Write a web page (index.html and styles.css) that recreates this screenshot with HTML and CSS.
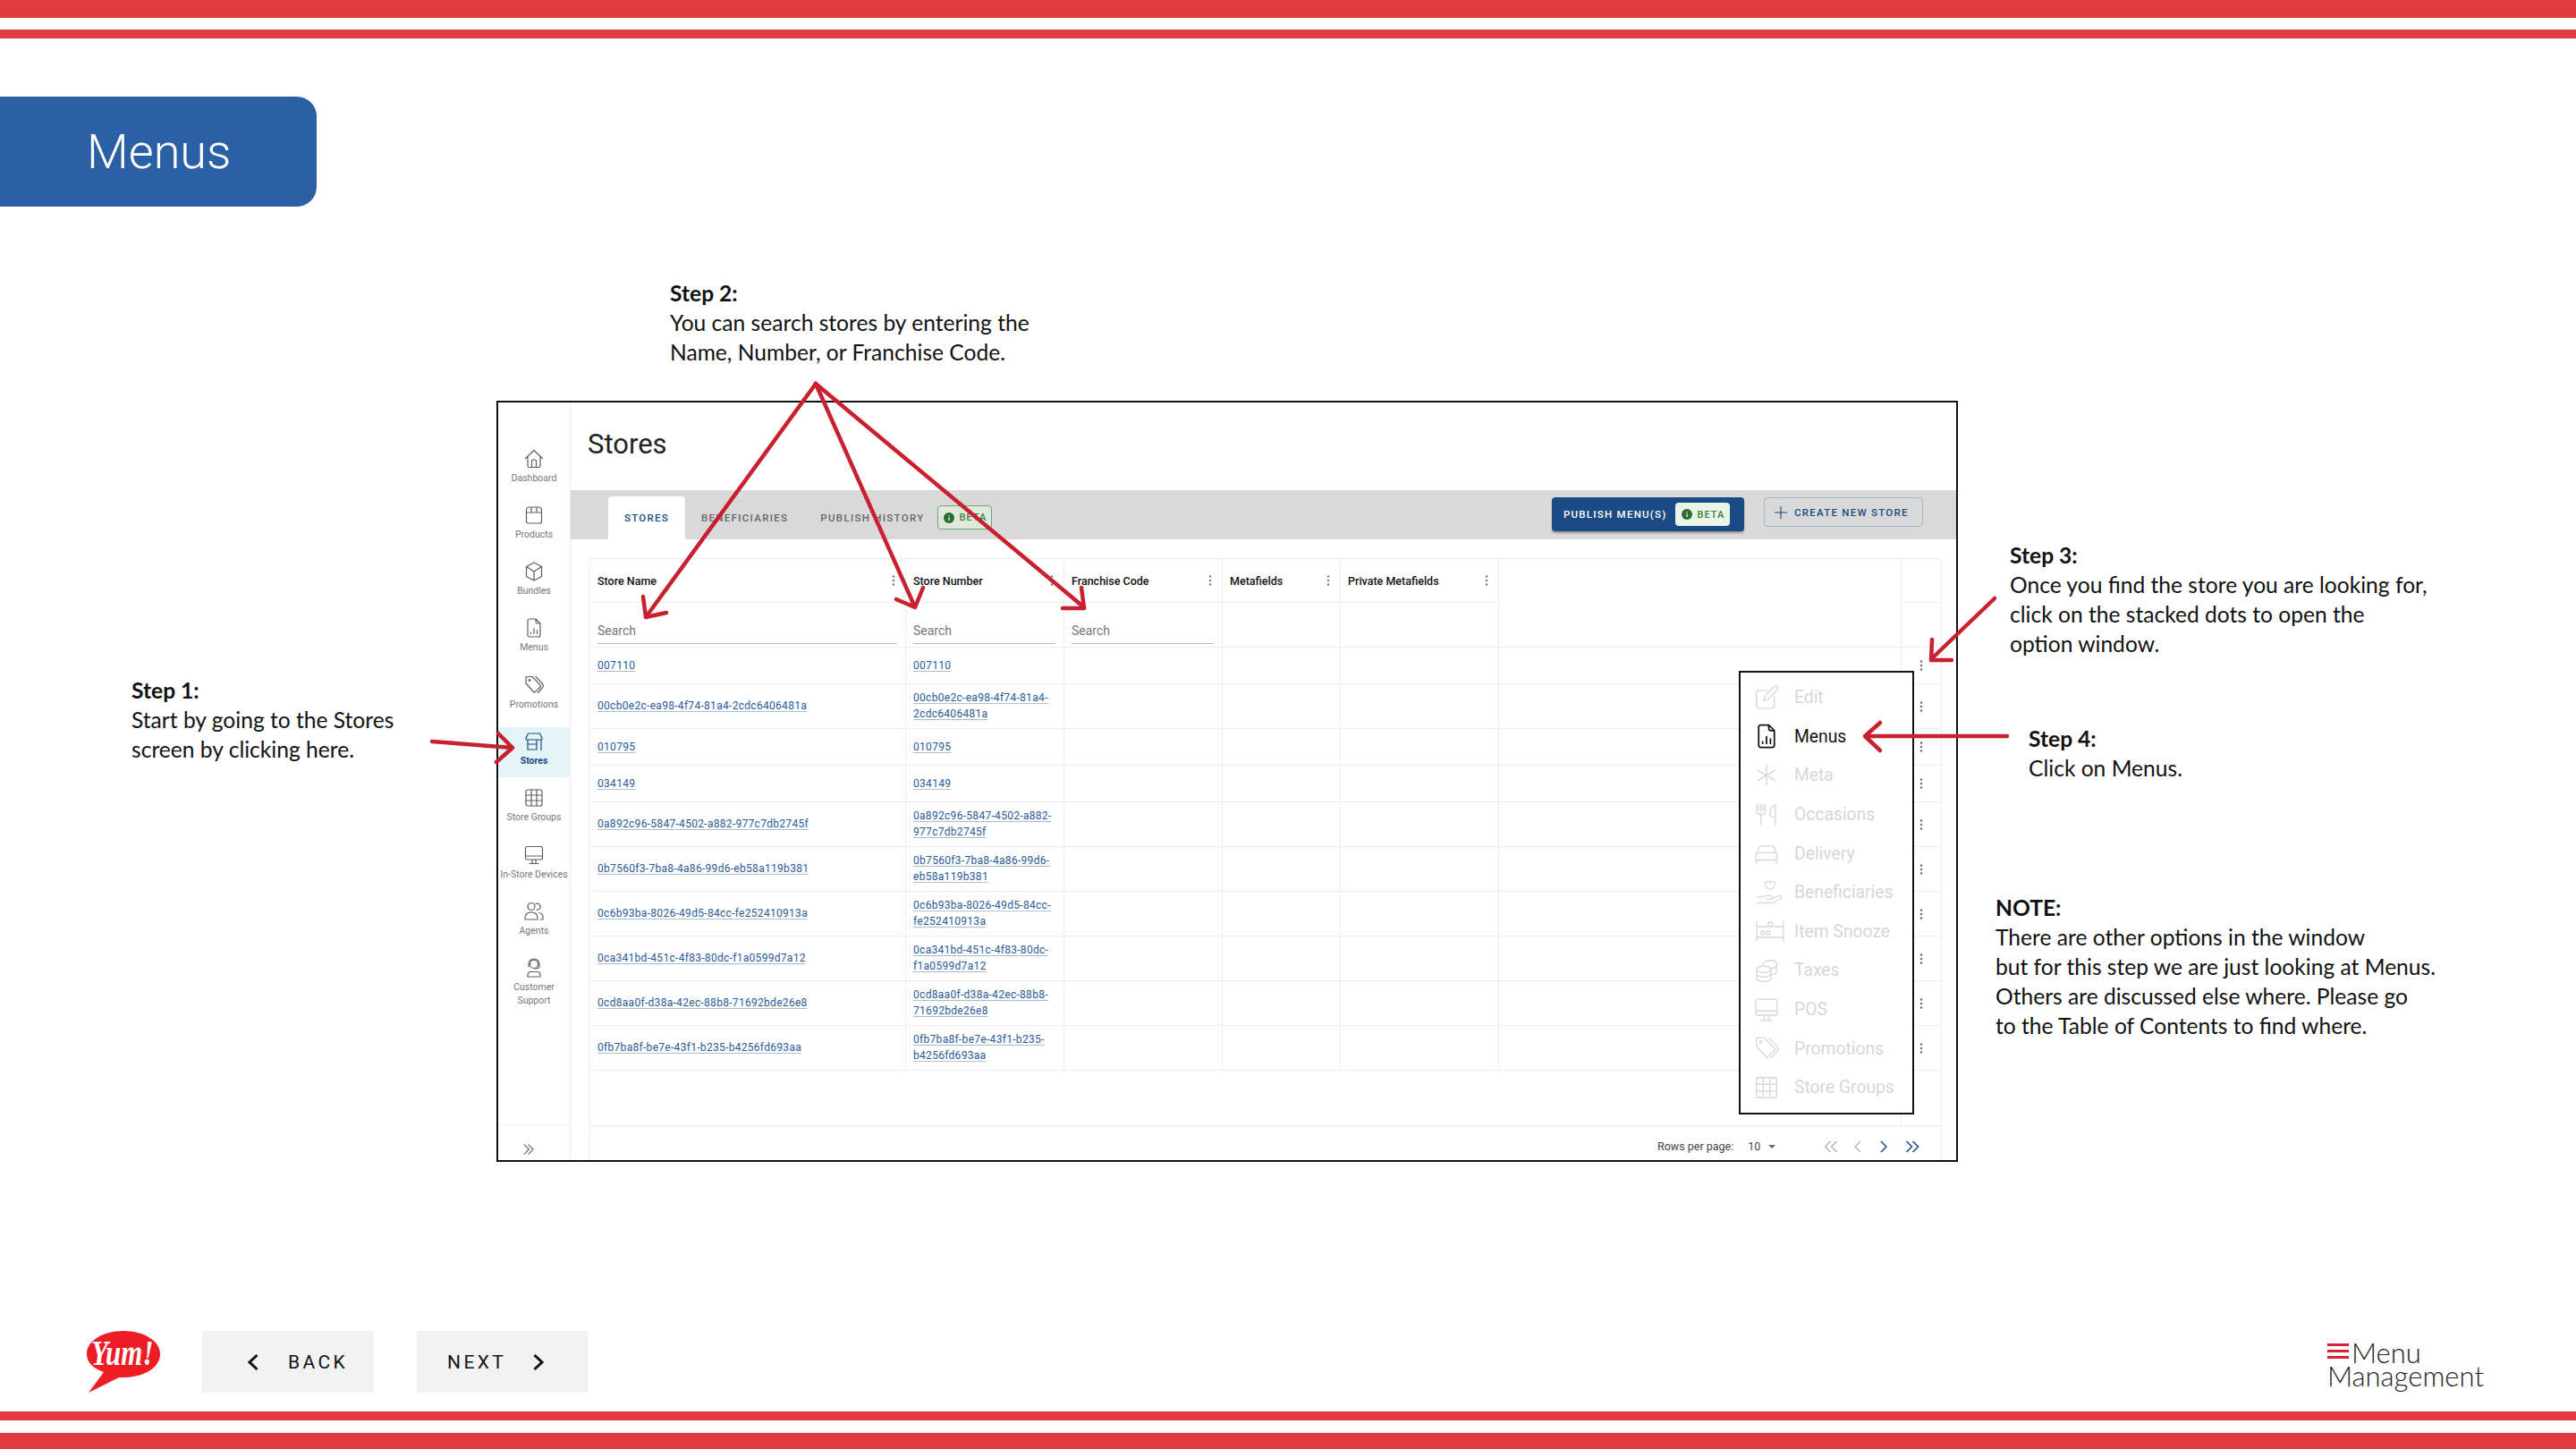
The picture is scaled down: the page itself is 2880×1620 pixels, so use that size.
FILE: index.html
```html
<!DOCTYPE html>
<html lang="en">
<head>
  <meta charset="UTF-8" />
  <title>Menus - Menu Management</title>
  <link rel="stylesheet" href="styles.css">
</head>

<body>
  <svg class="sprite" xmlns="http://www.w3.org/2000/svg">
    <symbol id="i-home" viewBox="0 0 24 24"><path d="M2.5 11.5 12 2.5l9.5 9M5 9.5V20a1.5 1.5 0 0 0 1.5 1.5h11A1.5 1.5 0 0 0 19 20V9.5M9.5 21.5V14a1 1 0 0 1 1-1h3a1 1 0 0 1 1 1v7.500"/></symbol>
    <symbol id="i-box" viewBox="0 0 24 24"><path d="M3.500 9V6a3 3 0 0 1 3-3h11a3 3 0 0 1 3 3v13a2 2 0 0 1-2 2h-13a2 2 0 0 1-2-2zM3.500 9h17M9 3v6M15 3v6"/></symbol>
    <symbol id="i-cube" viewBox="0 0 24 24"><path d="M12 2l8.500 4.500v11L12 22l-8.500-4.500v-11zM3.500 6.500 12 12l8.500-5.500M12 12v10"/></symbol>
    <symbol id="i-doc" viewBox="0 0 24 24"><path d="M7 2h7l5 5v13a2 2 0 0 1-2 2H7a2 2 0 0 1-2-2V4a2 2 0 0 1 2-2zM14 2v3a2 2 0 0 0 2 2h3M8.500 18.500v-1.500M12 18.500v-6M15.500 18.500v-4"/></symbol>
    <symbol id="i-tag" viewBox="0 0 24 24"><path d="M3 3.500a1 1 0 0 1 1-1h6l9 9.500a1.500 1.500 0 0 1 0 2l-5.500 5.500a1.500 1.500 0 0 1-2 0L3 10zM14 2.500l7.500 8a3 3 0 0 1 0 4l-5 6"/><circle cx="7" cy="6.500" r="1"/></symbol>
    <symbol id="i-store" viewBox="0 0 24 24"><path d="M5.500 3h13l2.500 5.500a1 1 0 0 1-1 1.500H4a1 1 0 0 1-1-1.500zM5 10v11h10V10M5 15h10M20 10v11.500"/></symbol>
    <symbol id="i-grid" viewBox="0 0 24 24"><rect x="3" y="3" width="18" height="18" rx="2"/><path d="M3 9h18M3 15h18M9 3v18M15 3v18"/></symbol>
    <symbol id="i-monitor" viewBox="0 0 24 24"><rect x="2.500" y="2.500" width="19" height="14.500" rx="2"/><path d="M2.500 13h19M10 17v4M14 17v4M7 21.500h10"/></symbol>
    <symbol id="i-agents" viewBox="0 0 24 24"><circle cx="9" cy="6.500" r="4"/><path d="M14 3.500a3.500 3.500 0 1 1 1 6.500M2 21v-2a6 6 0 0 1 6-6h2a6 6 0 0 1 6 6v2zM18 13.500a5 5 0 0 1 4 5V21h-3"/></symbol>
    <symbol id="i-support" viewBox="0 0 24 24"><circle cx="12" cy="8" r="4.500"/><path d="M6 11V8a6 6 0 0 1 12 0v2c0 2-2 3-5 3M5 22v-2a3.500 3.500 0 0 1 3.500-3.500h7A3.500 3.500 0 0 1 19 20v2z"/></symbol>
    <symbol id="i-edit" viewBox="0 0 24 24"><path d="M19 11v8a2.500 2.500 0 0 1-2.500 2.500h-11A2.500 2.500 0 0 1 3 19V8a2.500 2.500 0 0 1 2.500-2.500H13M9.500 14.500l1-4 8.500-8.500a1.800 1.800 0 0 1 2.800 2.500L13.500 13.500z"/></symbol>
    <symbol id="i-meta" viewBox="0 0 24 24"><path d="M12 3v18M4.200 7.500l15.600 9M19.800 7.500l-15.600 9"/></symbol>
    <symbol id="i-food" viewBox="0 0 24 24"><path d="M3 3v5a4 4 0 0 0 8 0V3M7 3v6M5 3v5M9 3v5M7 12v9M20 3c-4 1-5 5-5 9 0 1 1 2 2 2h3M20 3v18"/></symbol>
    <symbol id="i-car" viewBox="0 0 24 24"><path d="M3.500 12l1.500-4.500a2.500 2.500 0 0 1 2.500-2h9a2.500 2.500 0 0 1 2.500 2l1.500 4.500M2.500 12.500a1 1 0 0 1 1-1h17a1 1 0 0 1 1 1V18h-19zM3 18v2.500M21 18v2.500M6 15h.01M18 15h.01"/></symbol>
    <symbol id="i-hand" viewBox="0 0 28 24"><path d="M14 9.500s-5-2.800-5-5.800a2.600 2.600 0 0 1 5-1 2.600 2.600 0 0 1 5 1c0 3-5 5.800-5 5.800zM1 17h5l3-1.500h5.500a1.500 1.500 0 0 1 0 3.500H10M15 18.500l8-3a2 2 0 0 1 2.500 2.500L17 22.500H1"/></symbol>
    <symbol id="i-snooze" viewBox="0 0 32 24"><path d="M1 1v22M31 1v22M1 7h12M21 7h10M1 19h30"/><rect x="14" y="2" width="5" height="5" rx="1"/><rect x="6" y="12" width="4" height="4" rx="1"/><rect x="12" y="12" width="4" height="4" rx="1"/></symbol>
    <symbol id="i-coins" viewBox="0 0 24 24"><ellipse cx="9.500" cy="11" rx="6.500" ry="3"/><path d="M3 11v8c0 1.700 2.900 3 6.500 3s6.500-1.300 6.500-3v-8M3 15c0 1.700 2.900 3 6.500 3s6.500-1.300 6.500-3M8.500 6.500C9 4.500 12 3 15 3c3.500 0 6 1 6 3v7c0 1.500-2 2.500-5 2.500M16 10c3 0 5-1 5-3"/></symbol>
    <symbol id="i-kebab" viewBox="0 0 4 12"><circle cx="2" cy="1.500" r="1.200"/><circle cx="2" cy="6" r="1.200"/><circle cx="2" cy="10.500" r="1.200"/></symbol>
    <symbol id="i-info" viewBox="0 0 12 12"><circle cx="6" cy="6" r="6"/><path class="info-mark" d="M6 5.200v3.800M6 3v1"/></symbol>
  </svg>

  <div class="slide">
    <div class="bars bars-top"><i></i><i></i></div>

    <header class="title-box"><h1>Menus</h1></header>

    <section class="frame">
      <nav class="sidebar">
        <ul class="side-list">
          <li class="side-item"><svg class="side-icon"><use href="#i-home"/></svg><span>Dashboard</span></li>
          <li class="side-item"><svg class="side-icon"><use href="#i-box"/></svg><span>Products</span></li>
          <li class="side-item"><svg class="side-icon"><use href="#i-cube"/></svg><span>Bundles</span></li>
          <li class="side-item"><svg class="side-icon"><use href="#i-doc"/></svg><span>Menus</span></li>
          <li class="side-item"><svg class="side-icon"><use href="#i-tag"/></svg><span>Promotions</span></li>
          <li class="side-item active"><svg class="side-icon"><use href="#i-store"/></svg><span>Stores</span></li>
          <li class="side-item"><svg class="side-icon"><use href="#i-grid"/></svg><span>Store Groups</span></li>
          <li class="side-item"><svg class="side-icon"><use href="#i-monitor"/></svg><span>In-Store Devices</span></li>
          <li class="side-item"><svg class="side-icon"><use href="#i-agents"/></svg><span>Agents</span></li>
          <li class="side-item"><svg class="side-icon"><use href="#i-support"/></svg><span>Customer<br>Support</span></li>
        </ul>
        <div class="side-foot">
          <svg class="side-expand" viewBox="0 0 14 14"><path d="M2 1l6 6-6 6M7 1l6 6-6 6"/></svg>
        </div>
      </nav>

      <div class="app">
        <h2 class="app-title">Stores</h2>

        <div class="tabbar">
          <div class="tab active">STORES</div>
          <div class="tab tab-second">BENEFICIARIES</div>
          <div class="tab tab-third">PUBLISH HISTORY</div>
          <div class="beta beta-tab"><svg class="beta-icon"><use href="#i-info"/></svg>BETA</div>
          <div class="tab-actions">
            <button class="btn-publish">PUBLISH MENU(S)<span class="beta beta-btn"><svg class="beta-icon"><use href="#i-info"/></svg>BETA</span></button>
            <button class="btn-create"><svg class="plus" viewBox="0 0 14 14"><path d="M7 0v14M0 7h14"/></svg>CREATE NEW STORE</button>
          </div>
        </div>

        <div class="panel">
          <table class="grid">
            <colgroup>
              <col class="c-name"><col class="c-num"><col class="c-fran"><col class="c-meta"><col class="c-priv"><col class="c-blank"><col class="c-act">
            </colgroup>
            <thead>
              <tr class="row-head">
                <th><div class="th-in">Store Name<svg class="kebab"><use href="#i-kebab"/></svg></div></th>
                <th><div class="th-in">Store Number<svg class="kebab"><use href="#i-kebab"/></svg></div></th>
                <th><div class="th-in">Franchise Code<svg class="kebab"><use href="#i-kebab"/></svg></div></th>
                <th><div class="th-in">Metafields<svg class="kebab"><use href="#i-kebab"/></svg></div></th>
                <th><div class="th-in">Private Metafields<svg class="kebab"><use href="#i-kebab"/></svg></div></th>
                <th class="blank" rowspan="2"></th>
                <th class="act"></th>
              </tr>
              <tr class="row-filter">
                <td><div class="search">Search</div></td>
                <td><div class="search">Search</div></td>
                <td><div class="search">Search</div></td>
                <td></td>
                <td></td>
                <td class="act"></td>
              </tr>
            </thead>
            <tbody>
              <tr><td><a href="#">007110</a></td><td><a href="#">007110</a></td><td></td><td></td><td></td><td></td><td class="act"><svg class="kebab dark"><use href="#i-kebab"/></svg></td></tr>
              <tr class="tall"><td><a href="#">00cb0e2c-ea98-4f74-81a4-2cdc6406481a</a></td><td><a href="#">00cb0e2c-ea98-4f74-81a4-<br>2cdc6406481a</a></td><td></td><td></td><td></td><td></td><td class="act"><svg class="kebab dark"><use href="#i-kebab"/></svg></td></tr>
              <tr><td><a href="#">010795</a></td><td><a href="#">010795</a></td><td></td><td></td><td></td><td></td><td class="act"><svg class="kebab dark"><use href="#i-kebab"/></svg></td></tr>
              <tr><td><a href="#">034149</a></td><td><a href="#">034149</a></td><td></td><td></td><td></td><td></td><td class="act"><svg class="kebab dark"><use href="#i-kebab"/></svg></td></tr>
              <tr class="tall"><td><a href="#">0a892c96-5847-4502-a882-977c7db2745f</a></td><td><a href="#">0a892c96-5847-4502-a882-<br>977c7db2745f</a></td><td></td><td></td><td></td><td></td><td class="act"><svg class="kebab dark"><use href="#i-kebab"/></svg></td></tr>
              <tr class="tall"><td><a href="#">0b7560f3-7ba8-4a86-99d6-eb58a119b381</a></td><td><a href="#">0b7560f3-7ba8-4a86-99d6-<br>eb58a119b381</a></td><td></td><td></td><td></td><td></td><td class="act"><svg class="kebab dark"><use href="#i-kebab"/></svg></td></tr>
              <tr class="tall"><td><a href="#">0c6b93ba-8026-49d5-84cc-fe252410913a</a></td><td><a href="#">0c6b93ba-8026-49d5-84cc-<br>fe252410913a</a></td><td></td><td></td><td></td><td></td><td class="act"><svg class="kebab dark"><use href="#i-kebab"/></svg></td></tr>
              <tr class="tall"><td><a href="#">0ca341bd-451c-4f83-80dc-f1a0599d7a12</a></td><td><a href="#">0ca341bd-451c-4f83-80dc-<br>f1a0599d7a12</a></td><td></td><td></td><td></td><td></td><td class="act"><svg class="kebab dark"><use href="#i-kebab"/></svg></td></tr>
              <tr class="tall"><td><a href="#">0cd8aa0f-d38a-42ec-88b8-71692bde26e8</a></td><td><a href="#">0cd8aa0f-d38a-42ec-88b8-<br>71692bde26e8</a></td><td></td><td></td><td></td><td></td><td class="act"><svg class="kebab dark"><use href="#i-kebab"/></svg></td></tr>
              <tr class="tall"><td><a href="#">0fb7ba8f-be7e-43f1-b235-b4256fd693aa</a></td><td><a href="#">0fb7ba8f-be7e-43f1-b235-<br>b4256fd693aa</a></td><td></td><td></td><td></td><td></td><td class="act"><svg class="kebab dark"><use href="#i-kebab"/></svg></td></tr>
              <tr class="spacer"><td colspan="6"></td><td class="act"></td></tr>
            </tbody>
          </table>

          <div class="pager">
            <span class="pager-label">Rows per page:</span>
            <span class="pager-size">10</span>
            <span class="pager-caret"></span>
            <svg class="pg pg-double off" viewBox="0 0 16 14"><path d="M7.500 1 1.500 7l6 6M14.500 1l-6 6 6 6"/></svg>
            <svg class="pg pg-single off" viewBox="0 0 8 14"><path d="M7 1 1 7l6 6"/></svg>
            <svg class="pg pg-single on" viewBox="0 0 8 14"><path d="M1 1l6 6-6 6"/></svg>
            <svg class="pg pg-double on" viewBox="0 0 16 14"><path d="M1.500 1l6 6-6 6M8.500 1l6 6-6 6"/></svg>
          </div>
        </div>

        <ul class="popup">
          <li class="pop-item"><svg class="pop-icon"><use href="#i-edit"/></svg>Edit</li>
          <li class="pop-item enabled"><svg class="pop-icon"><use href="#i-doc"/></svg>Menus</li>
          <li class="pop-item"><svg class="pop-icon"><use href="#i-meta"/></svg>Meta</li>
          <li class="pop-item"><svg class="pop-icon"><use href="#i-food"/></svg>Occasions</li>
          <li class="pop-item"><svg class="pop-icon"><use href="#i-car"/></svg>Delivery</li>
          <li class="pop-item"><svg class="pop-icon wide"><use href="#i-hand"/></svg>Beneficiaries</li>
          <li class="pop-item"><svg class="pop-icon wider"><use href="#i-snooze"/></svg>Item Snooze</li>
          <li class="pop-item"><svg class="pop-icon"><use href="#i-coins"/></svg>Taxes</li>
          <li class="pop-item"><svg class="pop-icon"><use href="#i-monitor"/></svg>POS</li>
          <li class="pop-item"><svg class="pop-icon"><use href="#i-tag"/></svg>Promotions</li>
          <li class="pop-item"><svg class="pop-icon"><use href="#i-grid"/></svg>Store Groups</li>
        </ul>
      </div>
    </section>

    <div class="note note-1"><b>Step 1:</b><br>Start by going to the Stores<br>screen by clicking here.</div>
    <div class="note note-2"><b>Step 2:</b><br>You can search stores by entering the<br>Name, Number, or Franchise Code.</div>
    <div class="note note-3"><b>Step 3:</b><br>Once you find the store you are looking for,<br>click on the stacked dots to open the<br>option window.</div>
    <div class="note note-4"><b>Step 4:</b><br>Click on Menus.</div>
    <div class="note note-5"><b>NOTE:</b><br>There are other options in the window<br>but for this step we are just looking at Menus.<br>Others are discussed else where. Please go<br>to the Table of Contents to find where.</div>

    <!-- red callout arrows, page coordinates -->
    <svg class="arrows" viewBox="0 0 2880 1620">
      <path d="M912 429 722 690M719 667 722 690 745 685"/>
      <path d="M912 429 1023 679M1032 657 1023 679 1002 670"/>
      <path d="M912 429 1212 679M1209 657 1212 680 1188 680"/>
      <path d="M483 829 573 836M557 820 573 836 555 852"/>
      <path d="M2230 669 2159 737M2160 715 2159 738 2182 738"/>
      <path d="M2244 823H2085M2102 808 2085 823 2102 839"/>
    </svg>

    <footer class="foot">
      <svg class="yum" viewBox="0 0 84 70">
        <path class="yum-bubble" d="M42 0C65 0 83 11 83 26S65 52 42 52H37L3 69 20 46C8 42 1 35 1 26 1 11 19 0 42 0z"/>
        <text class="yum-text" transform="translate(6 38) scale(1 1.3)">Yum!</text>
      </svg>
      <button class="nav-btn nav-back"><svg class="nav-chev" viewBox="0 0 12 20"><path d="M10.500 2 2 10l8.500 8"/></svg>BACK</button>
      <button class="nav-btn nav-next">NEXT<svg class="nav-chev" viewBox="0 0 12 20"><path d="M1.500 2 10 10l-8.500 8"/></svg></button>
      <div class="brand">
        <div class="brand-top"><span class="brand-bars"><i></i><i></i><i></i></span>Menu</div>
        <div>Management</div>
      </div>
    </footer>

    <div class="bars bars-bottom"><i></i><i></i></div>
  </div>
</body>
</html>
```

FILE: styles.css
```css
* { box-sizing: border-box; margin: 0; padding: 0; }
html, body { background: #fff; }
body {
  width: 2880px;
  height: 1620px;
  overflow: hidden;
  font-family: 'Roboto', sans-serif;
  color: #111;
}
ul { list-style: none; }
button { font-family: inherit; border: none; cursor: pointer; }
.sprite { display: none; }

.slide {
  position: relative;
  width: 2880px;
  height: 1620px;
  display: flex;
  flex-direction: column;
}

/* red stripes */
.bars i { display: block; background: #e03c40; }
.bars-top i:first-child { height: 20px; margin-bottom: 13px; }
.bars-top i:last-child { height: 10px; }
.bars-bottom { margin-top: 21px; }
.bars-bottom i:first-child { height: 10px; margin-bottom: 14px; }
.bars-bottom i:last-child { height: 18px; }

.title-box {
  width: 354px;
  height: 123px;
  margin-top: 65px;
  padding-left: 97px;
  display: flex;
  align-items: center;
  background: #2b5fa6;
  border-radius: 0 22px 22px 0;
}
.title-box h1 {
  font-size: 54px;
  font-weight: 300;
  color: #fff;
}

/* screenshot of the app */
.frame {
  position: relative;
  width: 1634px;
  height: 851px;
  margin: 217px 0 0 555px;
  display: flex;
  border: 2px solid #111;
  background: #fff;
}
.sidebar {
  width: 81px;
  flex: none;
  display: flex;
  flex-direction: column;
  border-right: 1px solid #eee;
}
.side-list {
  padding-top: 46.5px;
  display: flex;
  flex-direction: column;
  gap: 7.3px;
}
.side-item {
  height: 56px;
  padding-top: 4px;
  display: flex;
  flex-direction: column;
  align-items: center;
  font-size: 10.5px;
  line-height: 15px;
  text-align: center;
  white-space: nowrap;
  color: #777;
}
.side-item.active {
  background: #e5f5f7;
  color: #1a4b84;
  font-weight: 700;
}
.side-icon {
  width: 24px;
  height: 24px;
  margin-bottom: 2px;
  flex: none;
  fill: none;
  stroke: #5f5f5f;
  stroke-width: 1.2;
  stroke-linejoin: round;
  stroke-linecap: round;
}
.side-item.active .side-icon { stroke: #1a4b84; }
.side-foot {
  margin-top: auto;
  height: 40px;
  padding: 20px 0 0 27px;
  border-top: 1px solid #f0f0f0;
}
.side-expand {
  display: block;
  width: 13px;
  height: 14px;
  fill: none;
  stroke: #666;
  stroke-width: 1.2;
}

.app {
  flex: 1;
  min-width: 0;
  display: flex;
  flex-direction: column;
}
.app-title {
  height: 98px;
  padding: 27px 0 0 19px;
  font-size: 31px;
  line-height: 40px;
  font-weight: 400;
  color: #222;
}
.tabbar {
  height: 55px;
  padding-left: 42px;
  display: flex;
  background: #d9d9d9;
}
.tab {
  margin-top: 7px;
  height: 48px;
  line-height: 48px;
  font-size: 11.5px;
  font-weight: 500;
  letter-spacing: 1.3px;
  color: #666;
  white-space: nowrap;
}
.tab.active {
  width: 86px;
  text-align: center;
  background: #fff;
  border-radius: 4px 4px 0 0;
  color: #1a4b84;
}
.tab-second { margin-left: 18px; }
.tab-third { margin-left: 36px; }
.beta {
  display: flex;
  align-items: center;
  gap: 6px;
  font-size: 11px;
  font-weight: 500;
  letter-spacing: 1px;
  color: #3c7f3e;
  background: #dfeadd;
  border-radius: 4px;
}
.beta-tab {
  width: 61px;
  height: 27px;
  margin: 17px 0 0 14px;
  padding-left: 6px;
  border: 1px solid #6ea571;
}
.beta-icon {
  width: 12px;
  height: 12px;
  flex: none;
  fill: #2e6b31;
}
.info-mark { stroke: #dfeadd; stroke-width: 1.4; fill: none; }
.tab-actions {
  margin-left: auto;
  padding: 8px 37px 0 0;
  display: flex;
  align-items: flex-start;
  gap: 22px;
}
.btn-publish {
  width: 215px;
  height: 38px;
  padding-left: 13px;
  display: flex;
  align-items: center;
  background: #1a4b84;
  color: #fff;
  font-size: 11.5px;
  font-weight: 500;
  letter-spacing: 1.25px;
  border-radius: 4px;
  box-shadow: 0 2px 2px rgba(0,0,0,0.3);
  white-space: nowrap;
}
.beta-btn {
  width: 61px;
  height: 26px;
  margin-left: 9px;
  padding-left: 7px;
  background: #e9f6e7;
}
.btn-create {
  width: 178px;
  height: 33px;
  padding-left: 11px;
  display: flex;
  align-items: center;
  gap: 8px;
  background: transparent;
  border: 1px solid #9fb3ca;
  border-radius: 4px;
  color: #1a4b84;
  font-size: 11.5px;
  font-weight: 500;
  letter-spacing: 1.25px;
  white-space: nowrap;
}
.plus { width: 14px; height: 14px; flex: none; fill: none; stroke: #1a4b84; stroke-width: 1.1; }

.panel {
  flex: 1;
  min-height: 0;
  margin: 21px 16px 0 21px;
  display: flex;
  flex-direction: column;
  border: 1px solid #eee;
  border-bottom: none;
  border-radius: 4px 4px 0 0;
}
.grid {
  width: 1510px;
  table-layout: fixed;
  border-collapse: separate;
  border-spacing: 0;
  font-size: 12px;
}
.c-name { width: 353px; }
.c-num, .c-fran, .c-priv { width: 177px; }
.c-meta { width: 132px; }
.c-blank { width: 450px; }
.c-act { width: 44px; }
.grid th, .grid td {
  padding: 0;
  border-right: 1px solid #eee;
  border-bottom: 1px solid #eee;
  text-align: left;
  vertical-align: middle;
}
.grid .act { border-right: none; text-align: center; }
.row-head th { height: 49px; font-size: 12.5px; font-weight: 500; color: #111; }
.row-filter td { height: 50px; vertical-align: bottom; }
.th-in {
  padding: 0 11px 0 8px;
  display: flex;
  align-items: center;
  justify-content: space-between;
  white-space: nowrap;
}
.kebab { display: block; width: 4px; height: 12px; fill: #777; }
.kebab.dark { margin: 0 auto; fill: #666; }
.search {
  margin: 0 9px 3px 8px;
  height: 28px;
  line-height: 26px;
  font-size: 14px;
  color: #777;
  border-bottom: 1px solid #bbb;
}
tbody td { height: 41px; }
tbody tr.tall td { height: 50px; }
tbody td:not(.act) { padding: 1px 0 0 8px; }
tbody tr.spacer td { height: 61px; border-bottom: none; }
tbody tr.spacer td:first-child { border-right: 1px solid #eee; padding: 0; }
.grid a {
  display: inline-block;
  line-height: 17.6px;
  letter-spacing: 0.3px;
  color: #2a5a96;
  text-decoration: underline;
  text-decoration-color: #a9bcd6;
  text-underline-offset: 2px;
}

.pager {
  flex: 1;
  display: flex;
  align-items: center;
  padding-top: 6px;
  border-top: 2px solid #f2f2f2;
  font-size: 12.5px;
  color: #444;
}
.pager-label { margin-left: 1193px; }
.pager-size { margin-left: 16px; }
.pager-caret {
  width: 0;
  height: 0;
  margin: 0 54px 0 9px;
  border-left: 4px solid transparent;
  border-right: 4px solid transparent;
  border-top: 4px solid #666;
}
.pg { fill: none; stroke-width: 1.5; height: 14px; }
.pg-double { width: 16px; }
.pg-single { width: 8px; }
.pg.off { stroke: #b5b5b5; }
.pg.on { stroke: #1a4b84; }
.pg-double.off { margin-right: 18px; }
.pg-single.off { margin-right: 21px; }
.pg-single.on { margin-right: 20px; }

/* option window opened from the row dots */
.popup {
  position: absolute;
  left: 1387px;
  top: 300px;
  width: 196px;
  height: 496px;
  padding: 6px 0 0 17px;
  border: 2px solid #111;
  background: #fff;
}
.pop-item {
  height: 43.6px;
  display: flex;
  align-items: center;
  font-size: 19.3px;
  color: #d6d6d6;
  white-space: nowrap;
}
.pop-item.enabled { color: #111; }
.pop-icon {
  width: 30px;
  height: 30px;
  margin: 0 16px 0 -3px;
  flex: none;
  fill: none;
  stroke: #d8d8d8;
  stroke-width: 1.1;
  stroke-linejoin: round;
  stroke-linecap: round;
}
.pop-icon.wide { width: 32px; height: 27px; margin: 0 11px 0 0; }
.pop-icon.wider { width: 32px; height: 24px; margin: 0 11px 0 0; stroke-width: 1.3; }
.enabled .pop-icon { stroke: #111; stroke-width: 1.4; }

/* slide notes */
.note {
  position: absolute;
  font-family: 'Lato', sans-serif;
  font-size: 24.6px;
  line-height: 33px;
  color: #111;
  white-space: nowrap;
}
.note b { font-weight: 700; }
.note-1 { left: 147px; top: 755px; }
.note-2 { left: 749px; top: 311px; }
.note-3 { left: 2247px; top: 604px; }
.note-4 { left: 2268px; top: 809px; }
.note-5 { left: 2231px; top: 998px; }

.arrows {
  position: absolute;
  left: 0;
  top: 0;
  width: 2880px;
  height: 1620px;
  pointer-events: none;
  fill: none;
  stroke: #c8202f;
  stroke-width: 4.5;
  stroke-linecap: round;
  stroke-linejoin: round;
}

.foot {
  margin-top: auto;
  height: 69px;
  display: flex;
  align-items: flex-start;
  padding-left: 96px;
}
.yum { width: 84px; height: 70px; flex: none; }
.yum-bubble { fill: #ee1c25; }
.yum-text {
  font-family: 'Liberation Serif', serif;
  font-weight: 700;
  font-style: italic;
  font-size: 31px;
  fill: #fff;
}
.nav-btn {
  width: 192px;
  height: 69px;
  display: flex;
  align-items: center;
  background: #f2f2f2;
  font-size: 21px;
  letter-spacing: 3.4px;
  color: #111;
}
.nav-chev {
  width: 12px;
  height: 20px;
  fill: none;
  stroke: #111;
  stroke-width: 3;
}
.nav-back { margin-left: 46px; padding-left: 51px; }
.nav-back .nav-chev { margin-right: 33px; }
.nav-next { margin-left: 48px; padding-left: 34px; }
.nav-next .nav-chev { margin-left: 30px; }
.brand {
  margin-left: auto;
  margin-right: 103px;
  padding-top: 11px;
  font-family: 'Lato', sans-serif;
  font-weight: 300;
  font-size: 31px;
  line-height: 26px;
  color: #222;
}
.brand-top { display: flex; align-items: center; }
.brand-bars { width: 24px; margin-right: 3px; }
.brand-bars i {
  display: block;
  height: 3px;
  margin-bottom: 4px;
  background: #d9213a;
}
```
